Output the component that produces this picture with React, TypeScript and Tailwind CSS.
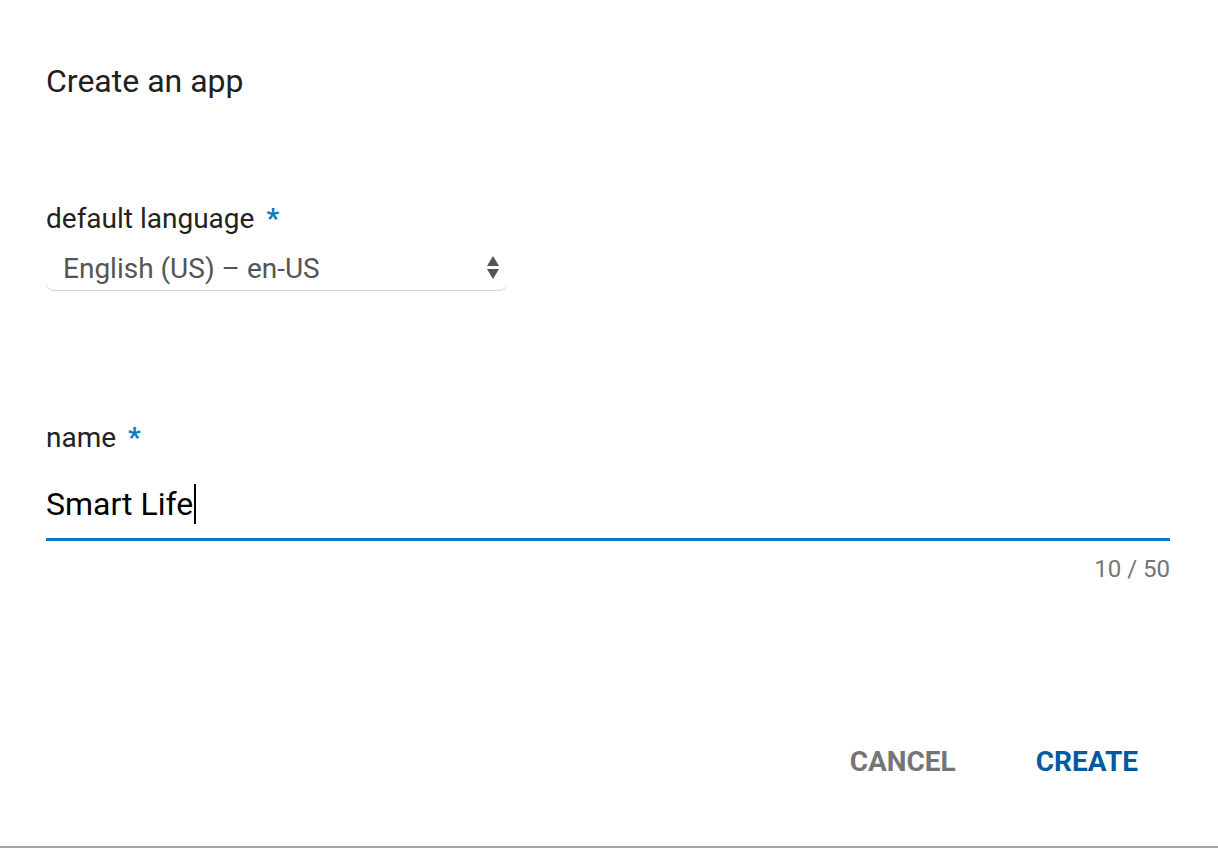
import React from 'react';

const font = { fontFamily: 'Roboto, "Noto Sans", sans-serif' };

function Star() {
  return <span className="ml-[12px] font-bold text-[#0a7bc2]">*</span>;
}

export default function App() {
  return (
    <div
      style={font}
      className="w-[1218px] h-[848px] bg-white flex flex-col border-b-2 border-[#a3a3a3] overflow-hidden"
    >
      <div className="pl-[46px] pr-[48px] flex flex-col flex-1">
        <h1 className="mt-[61px] text-[32px] leading-[40px] text-[#212121]">Create an app</h1>

        <label className="mt-[100px] text-[28px] leading-[36px] text-[#222]">
          default language
          <Star />
        </label>
        <div className="mt-[5px] w-[461px] h-[48px] relative rounded-b-[8px] shadow-[0_1px_0_#d2d2d2] pl-[17px] pt-[9px]">
          <span className="block text-[28px] leading-[36px] text-[#555]">English (US) – en-US</span>
          <svg
            className="absolute right-[8px] top-[14px]"
            width="12"
            height="24"
            viewBox="0 0 12 24"
          >
            <path d="M6 0 L12 10 L0 10 Z" fill="#555" />
            <path d="M0 13 L12 13 L6 23 Z" fill="#555" />
          </svg>
        </div>

        <label className="mt-[130px] text-[28px] leading-[36px] text-[#222]">
          name
          <Star />
        </label>
        <div className="mt-[28px] flex items-center h-[40px]">
          <span className="text-[32px] leading-[40px] text-black">Smart Life</span>
          <span className="ml-[1px] w-[2px] h-[40px] bg-black" />
        </div>
        <div className="mt-[14px] h-[3px] bg-[#0a79c0]" />
        <div className="mt-[12px] text-right text-[24px] leading-[32px] text-[#757575]">10 / 50</div>

        <div className="mt-auto mb-[66px] flex justify-end items-center pr-[32px]">
          <button className="text-[28px] leading-[36px] font-bold text-[#757575]">CANCEL</button>
          <button className="ml-[80px] text-[28px] leading-[36px] font-bold text-[#04599f]">CREATE</button>
        </div>
      </div>
    </div>
  );
}
